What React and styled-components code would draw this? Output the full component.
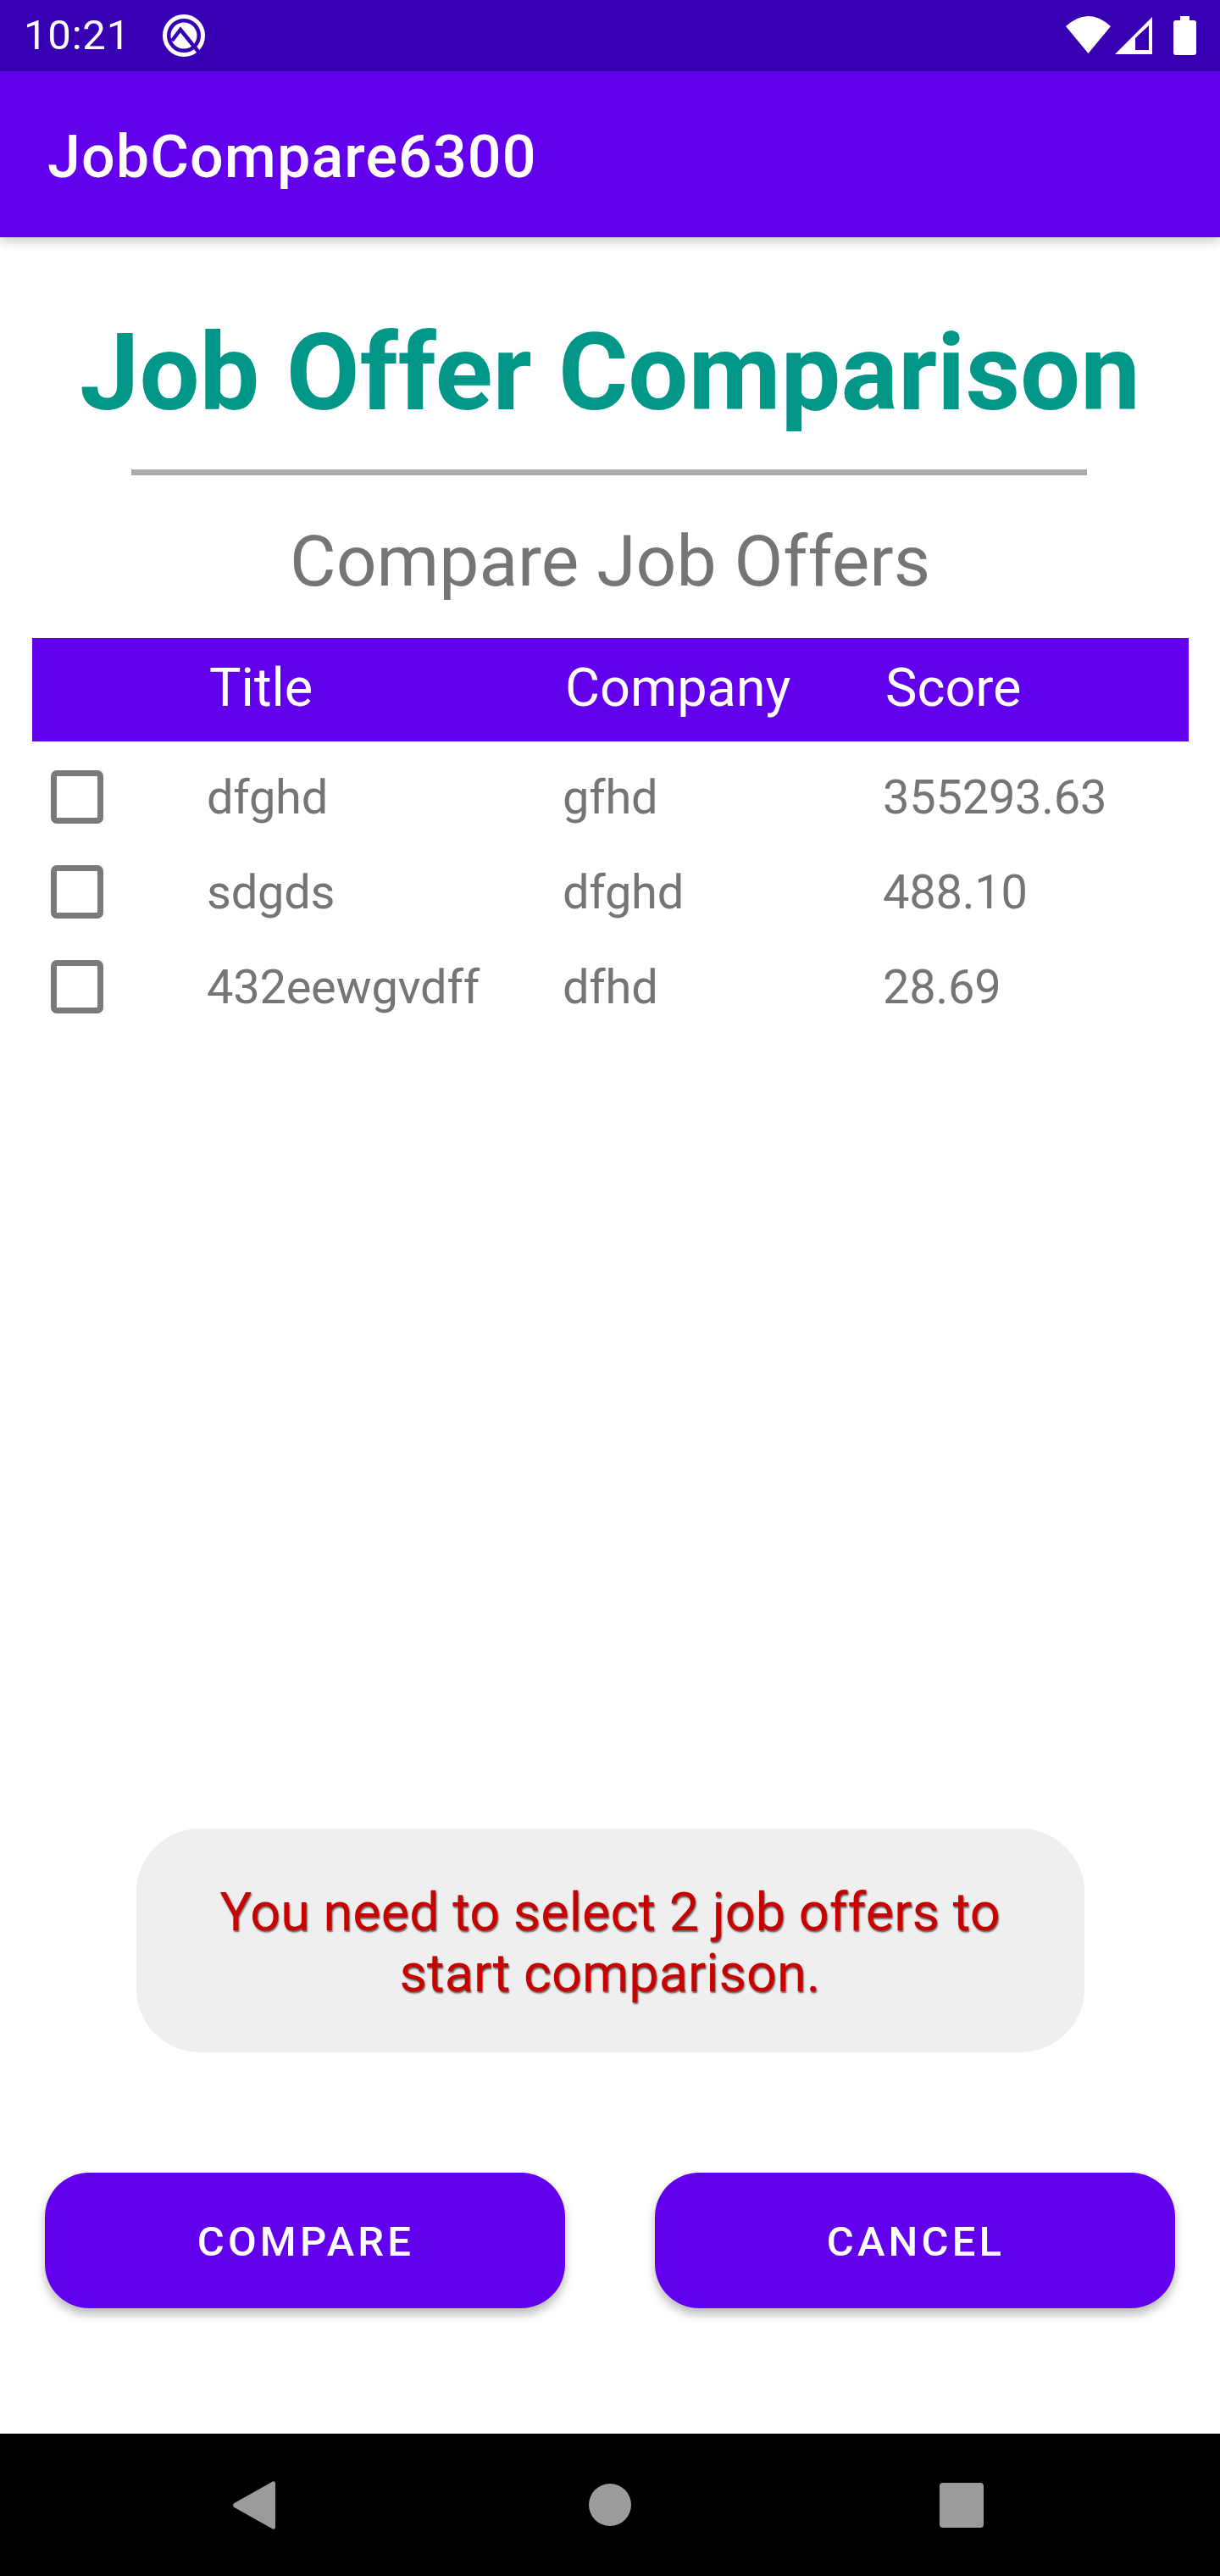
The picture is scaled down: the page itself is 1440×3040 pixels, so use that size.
import React from 'react';
import styled, { createGlobalStyle } from 'styled-components';

const Global = createGlobalStyle`
  html, body { margin: 0; padding: 0; background: #fff; }
  body { font-family: Roboto, "Liberation Sans", sans-serif; }
  * { box-sizing: border-box; }
`;
const Screen = styled.div`
  width: 1440px; height: 3040px; display: flex; flex-direction: column; background: #fff; overflow: hidden;
`;
const StatusBar = styled.div`
  height: 84px; flex: none; background: #3700b3; color: #fff; display: flex; align-items: center;
  padding: 0 28px 0 28px; justify-content: space-between;
`;
const StatusLeft = styled.div`display: flex; align-items: center; gap: 38px;`;
const Clock = styled.span`font-size: 49px; line-height: 84px; font-weight: 400; letter-spacing: .8px;`;
const StatusIcon = styled.svg`display: block;`;
const AppBar = styled.div`
  height: 196px; flex: none; background: #6200ee; color: #fff; display: flex; align-items: center;
  padding: 5px 0 0 56px; font-size: 70px; font-weight: 500; letter-spacing: 1.1px;
  box-shadow: 0 5px 12px rgba(0,0,0,.2); position: relative; z-index: 1;
`;
const Main = styled.div`flex: 1; display: flex; flex-direction: column; align-items: center;`;
const Heading = styled.h1`
  margin: 86px 0 0; font-size: 126px; line-height: 148px; font-weight: 700; color: #009688; text-align: center;
`;
const Rule = styled.div`width: 1128px; height: 7px; background: #aaa; margin: 40px 2px 0 0;`;
const SubHeading = styled.h2`
  margin: 53px 0 0; font-size: 84px; line-height: 98px; font-weight: 400; color: #757575;
`;
const Table = styled.div`align-self: stretch; margin: 41px 37px 0 38px;`;
const HeaderRow = styled.div`
  display: grid; grid-template-columns: 209px 420px 378px 1fr; height: 122px; align-items: center;
  background: #6200ee; color: #fff; font-size: 63px; padding-bottom: 6px;
`;
const Rows = styled.div`padding-top: 10px;`;
const Row = styled.div`
  display: grid; grid-template-columns: 206px 420px 378px 1fr; height: 112px; align-items: center;
  font-size: 56px; letter-spacing: -.25px; color: #757575;
`;
const Check = styled.span`
  display: block; width: 62px; height: 63px; margin: -2px 0 0 22px; border: 7px solid #7a7a7a; border-radius: 7px;
`;
const Toast = styled.div`
  margin-top: auto; width: 1119px; height: 264px; border-radius: 75px; background: #efefef; color: #c80000;
  font-size: 63px; line-height: 72px; text-align: center; display: flex; align-items: center; justify-content: center;
  padding: 6px 80px 0; text-shadow: 1px 1.500px 2px rgba(0,0,0,.6);
`;
const Buttons = styled.div`
  align-self: stretch; display: flex; justify-content: space-between; padding: 0 53px; margin: 142px 0 148px;
`;
const Button = styled.button`
  width: 614px; height: 160px; border: 0; border-radius: 52px; background: #6200ee; color: #fff;
  padding: 2px 0 0 2px;
  font: 500 49px Roboto, sans-serif; letter-spacing: .085em; text-transform: uppercase;
  box-shadow: 0 7px 12px rgba(0,0,0,.28);
`;
const NavBar = styled.div`
  height: 168px; flex: none; background: #000; display: flex; align-items: center; padding-left: 275px;
`;
const NavIcon = styled.svg`display: block; fill: #9b9b9b; margin-left: ${(p) => p.$offset || 0}px;`;

const rows = [
  ['dfghd', 'gfhd', '355293.63'],
  ['sdgds', 'dfghd', '488.10'],
  ['432eewgvdff', 'dfhd', '28.69'],
];

export default function App() {
  return (
    <Screen>
      <Global />
      <StatusBar>
        <StatusLeft>
          <Clock>10:21</Clock>
          <StatusIcon width="50" height="50" viewBox="0 0 50 50">
            <circle cx="25" cy="25" r="22.500" fill="none" stroke="#fff" strokeWidth="5" />
            <circle cx="25" cy="25" r="15.500" fill="#fff" />
            <polyline points="11,31 21,18 47,50" fill="none" stroke="#3700b3" strokeWidth="4.500" />
          </StatusIcon>
        </StatusLeft>
        <StatusIcon width="154" height="46" viewBox="0 0 154 46">
          <path fill="#fff" d="M0 12Q26.500 -12 53 12L26.500 44Z" />
          <path fill="#fff" fillRule="evenodd" d="M58 45 102 1V45ZM82 26V40H98V11Z" />
          <path fill="#fff" d="M135 0h11v5h5a3 3 0 0 1 3 3v35a3 3 0 0 1-3 3h-21a3 3 0 0 1-3-3V8a3 3 0 0 1 3-3h5Z" />
        </StatusIcon>
      </StatusBar>
      <AppBar>JobCompare6300</AppBar>
      <Main>
        <Heading>Job Offer Comparison</Heading>
        <Rule />
        <SubHeading>Compare Job Offers</SubHeading>
        <Table>
          <HeaderRow>
            <span />
            <span>Title</span>
            <span>Company</span>
            <span>Score</span>
          </HeaderRow>
          <Rows>
            {rows.map((r) => (
              <Row key={r[0]}>
                <Check />
                <span>{r[0]}</span>
                <span>{r[1]}</span>
                <span>{r[2]}</span>
              </Row>
            ))}
          </Rows>
        </Table>
        <Toast>You need to select 2 job offers to start comparison.</Toast>
        <Buttons>
          <Button>Compare</Button>
          <Button>Cancel</Button>
        </Buttons>
      </Main>
      <NavBar>
        <NavIcon width="50" height="57" viewBox="0 0 50 57"><path d="M46 1c2-1.500 4-.500 4 2v51c0 2.500-2 3.500-4 2L1.500 31c-2-1.500-2-3.500 0-5Z" /></NavIcon>
        <NavIcon $offset={370} width="50" height="50" viewBox="0 0 50 50"><circle cx="25" cy="25" r="25" /></NavIcon>
        <NavIcon $offset={364} width="52" height="53" viewBox="0 0 52 53"><rect width="52" height="53" rx="4" /></NavIcon>
      </NavBar>
    </Screen>
  );
}
